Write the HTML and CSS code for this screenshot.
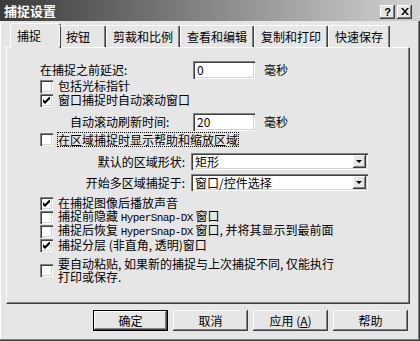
FILE: index.html
```html
<!DOCTYPE html>
<html>
  <head>
    <meta charset="UTF-8">
    <title>捕捉设置</title>
    <link rel="stylesheet" href="styles.css">
  </head>
  <body>
    <div class="window">
      <div class="titlebar">
        <span class="title">捕捉设置</span>
        <div class="caption-btns">
          <span class="cbtn">?</span>
          <span class="cbtn close">
            <svg width="8" height="7" viewBox="0 0 8 7"><path d="M0 0h2l2 2.5L6 0h2L5 3.5 8 7H6L4 4.5 2 7H0l3-3.5z" fill="#000"/></svg>
          </span>
        </div>
      </div>

      <div class="tabs">
        <div class="tab active">捕捉</div>
        <div class="tab">按钮</div>
        <div class="tab">剪裁和比例</div>
        <div class="tab">查看和编辑</div>
        <div class="tab">复制和打印</div>
        <div class="tab">快速保存</div>
      </div>

      <div class="panel">
        <!-- delay -->
        <div class="frow">
          <span class="flabel">在捕捉之前延迟:</span>
          <span class="field">0</span>
          <span class="unit">毫秒</span>
        </div>

        <div class="cb"><span class="box"></span><span>包括光标指针</span></div>
        <div class="cb"><span class="box checked"></span><span>窗口捕捉时自动滚动窗口</span></div>

        <div class="frow sub">
          <span class="flabel">自动滚动刷新时间:</span>
          <span class="field">20</span>
          <span class="unit">毫秒</span>
        </div>

        <div class="cb zone"><span class="box"></span><span class="focus">在区域捕捉时显示帮助和缩放区域</span></div>

        <!-- region selects -->
        <div class="srow first">
          <span class="slabel">默认的区域形状:</span>
          <div class="select"><span class="stext">矩形</span><span class="drop"></span></div>
        </div>
        <div class="srow">
          <span class="slabel">开始多区域捕捉于:</span>
          <div class="select"><span class="stext">窗口/控件选择</span><span class="drop"></span></div>
        </div>

        <div class="cb group"><span class="box checked"></span><span>在捕捉图像后播放声音</span></div>
        <div class="cb"><span class="box"></span><span>捕捉前隐藏 <span class="mono">HyperSnap-DX</span> 窗口</span></div>
        <div class="cb"><span class="box"></span><span>捕捉后恢复 <span class="mono">HyperSnap-DX</span> 窗口, 并将其显示到最前面</span></div>
        <div class="cb"><span class="box checked"></span><span>捕捉分层 (非直角, 透明)窗口</span></div>

        <div class="cb multi"><span class="box"></span><span>要自动粘贴, 如果新的捕捉与上次捕捉不同, 仅能执行<br>打印或保存.</span></div>
      </div>

      <div class="buttons">
        <button class="btn default">确定</button>
        <button class="btn">取消</button>
        <button class="btn">应用 (<u>A</u>)</button>
        <button class="btn">帮助</button>
      </div>
    </div>
  </body>
</html>
```

FILE: styles.css
```css
body {
  margin: 0;
  font-family: "Noto Sans CJK SC", sans-serif;
  font-size: 12px;
  color: #000;
  background: #e6e6e6;
}

.window {
  width: 420px;
  height: 341px;
  box-sizing: border-box;
  background: #e6e6e6;
  box-shadow: inset -1px -1px #404040, inset -2px -2px #808080, inset 1px 0 #fff;
}

/* title bar */
.titlebar {
  height: 21px;
  display: flex;
  align-items: center;
  justify-content: space-between;
  background: linear-gradient(to right, #3a3a3a, #d4d4d4);
  padding: 0 8px 0 4px;
}

.title {
  color: #fff;
  font-weight: bold;
  font-size: 13px;
  line-height: 21px;
}

.caption-btns {
  display: flex;
  gap: 2px;
  margin-top: 2px;
}

.cbtn {
  width: 15px;
  height: 14px;
  box-sizing: border-box;
  display: flex;
  align-items: center;
  justify-content: center;
  background: #e6e6e6;
  font-family: "Liberation Sans", sans-serif;
  font-weight: bold;
  font-size: 11px;
  box-shadow: inset -1px -1px #404040, inset 1px 1px #fff, inset -2px -2px #808080;
}

/* tabs */
.tabs {
  display: flex;
  padding: 2px 0 0 12px;
  height: 24px;
  position: relative;
  z-index: 1;
}

.tab {
  padding: 0 6px;
  height: 22px;
  margin-top: 2px;
  line-height: 22px;
  border-top: 1px solid #fff;
  border-left: 1px solid #fff;
  border-right: 1px solid #404040;
  box-shadow: inset -1px 0 #808080;
  border-radius: 2px 2px 0 0;
  box-sizing: border-box;
  min-width: 47px;
}

.tab.active {
  margin: 0 -2px;
  padding: 0 8px 0 6px;
  height: 25px;
  line-height: 24px;
  min-width: 51px;
  background: #e6e6e6;
}

/* tab page */
.panel {
  margin: 0 10px 0 6px;
  height: 257px;
  box-sizing: border-box;
  border-top: 1px solid #fff;
  border-left: 1px solid #fff;
  border-right: 1px solid #404040;
  border-bottom: 1px solid #404040;
  box-shadow: inset -1px -1px #808080;
  padding: 13px 0 0 33px;
}

.frow {
  display: flex;
  align-items: center;
  height: 18px;
  line-height: 14px;
}

.frow .flabel {
  width: 153px;
}

.frow.sub {
  margin-top: 6px;
  padding-left: 30px;
}

.frow.sub .flabel {
  width: 123px;
}

.field {
  width: 62px;
  height: 18px;
  box-sizing: border-box;
  background: #fff;
  padding: 1px 0 0 4px;
  line-height: 16px;
  box-shadow: inset 1px 1px #808080, inset 2px 2px #404040, inset -1px -1px #fff, inset -2px -2px #d4d4d4;
}

.unit {
  margin-left: 9px;
}

/* checkboxes */
.cb {
  display: flex;
  align-items: center;
  height: 14px;
  line-height: 14px;
  gap: 5px;
  white-space: nowrap;
}

.cb.zone {
  margin-top: 1px;
}

.cb.group {
  margin-top: 5px;
}

.cb.multi {
  margin-top: 5px;
  height: auto;
  line-height: 13px;
}

.box {
  width: 13px;
  height: 13px;
  flex: none;
  box-sizing: border-box;
  background: #fff;
  box-shadow: inset 1px 1px #808080, inset 2px 2px #404040, inset -1px -1px #fff, inset -2px -2px #d4d4d4;
  position: relative;
}

.box.checked::after {
  content: "";
  position: absolute;
  left: 3px;
  top: 3px;
  width: 7px;
  height: 7px;
  background: url("data:image/svg+xml;utf8,<svg xmlns='http://www.w3.org/2000/svg' width='7' height='7'><path d='M0 2v3l2 2 5-5V-1L2 4z' fill='black'/></svg>") no-repeat;
}

.focus {
  outline: 1px dotted #000;
  outline-offset: 0;
  line-height: 13px;
}

.mono {
  font-family: "Liberation Mono", monospace;
  font-size: 11px;
  letter-spacing: -0.6px;
}

/* selects */
.srow {
  display: flex;
  align-items: center;
  height: 17px;
  line-height: 14px;
  margin-top: 4px;
}

.srow.first {
  margin-top: 7px;
}

.slabel {
  width: 145px;
  text-align: right;
  margin-right: 6px;
}

.select {
  width: 177px;
  height: 17px;
  box-sizing: border-box;
  background: #fff;
  display: flex;
  align-items: center;
  justify-content: space-between;
  padding: 2px 2px 2px 4px;
  box-shadow: inset 1px 1px #808080, inset 2px 2px #404040, inset -1px -1px #fff, inset -2px -2px #d4d4d4;
}

.drop {
  width: 13px;
  height: 13px;
  box-sizing: border-box;
  background: #e6e6e6;
  box-shadow: inset -1px -1px #404040, inset 1px 1px #fff, inset -2px -2px #808080;
  position: relative;
}

.drop::after {
  content: "";
  position: absolute;
  left: 3px;
  top: 5px;
  border-left: 3px solid transparent;
  border-right: 3px solid transparent;
  border-top: 3px solid #000;
}

/* bottom buttons */
.buttons {
  display: flex;
  justify-content: flex-end;
  gap: 5px;
  padding: 6px 12px 0 0;
}

.btn {
  width: 75px;
  height: 21px;
  padding: 0;
  font-family: "Noto Sans CJK SC", sans-serif;
  font-size: 12px;
  line-height: 14px;
  background: #e6e6e6;
  border: none;
  box-shadow: inset -1px -1px #404040, inset 1px 1px #fff, inset -2px -2px #808080;
}

.btn.default {
  border: 1px solid #000;
  box-shadow: inset -1px -1px #404040, inset 1px 1px #fff, inset -2px -2px #808080;
}
```
